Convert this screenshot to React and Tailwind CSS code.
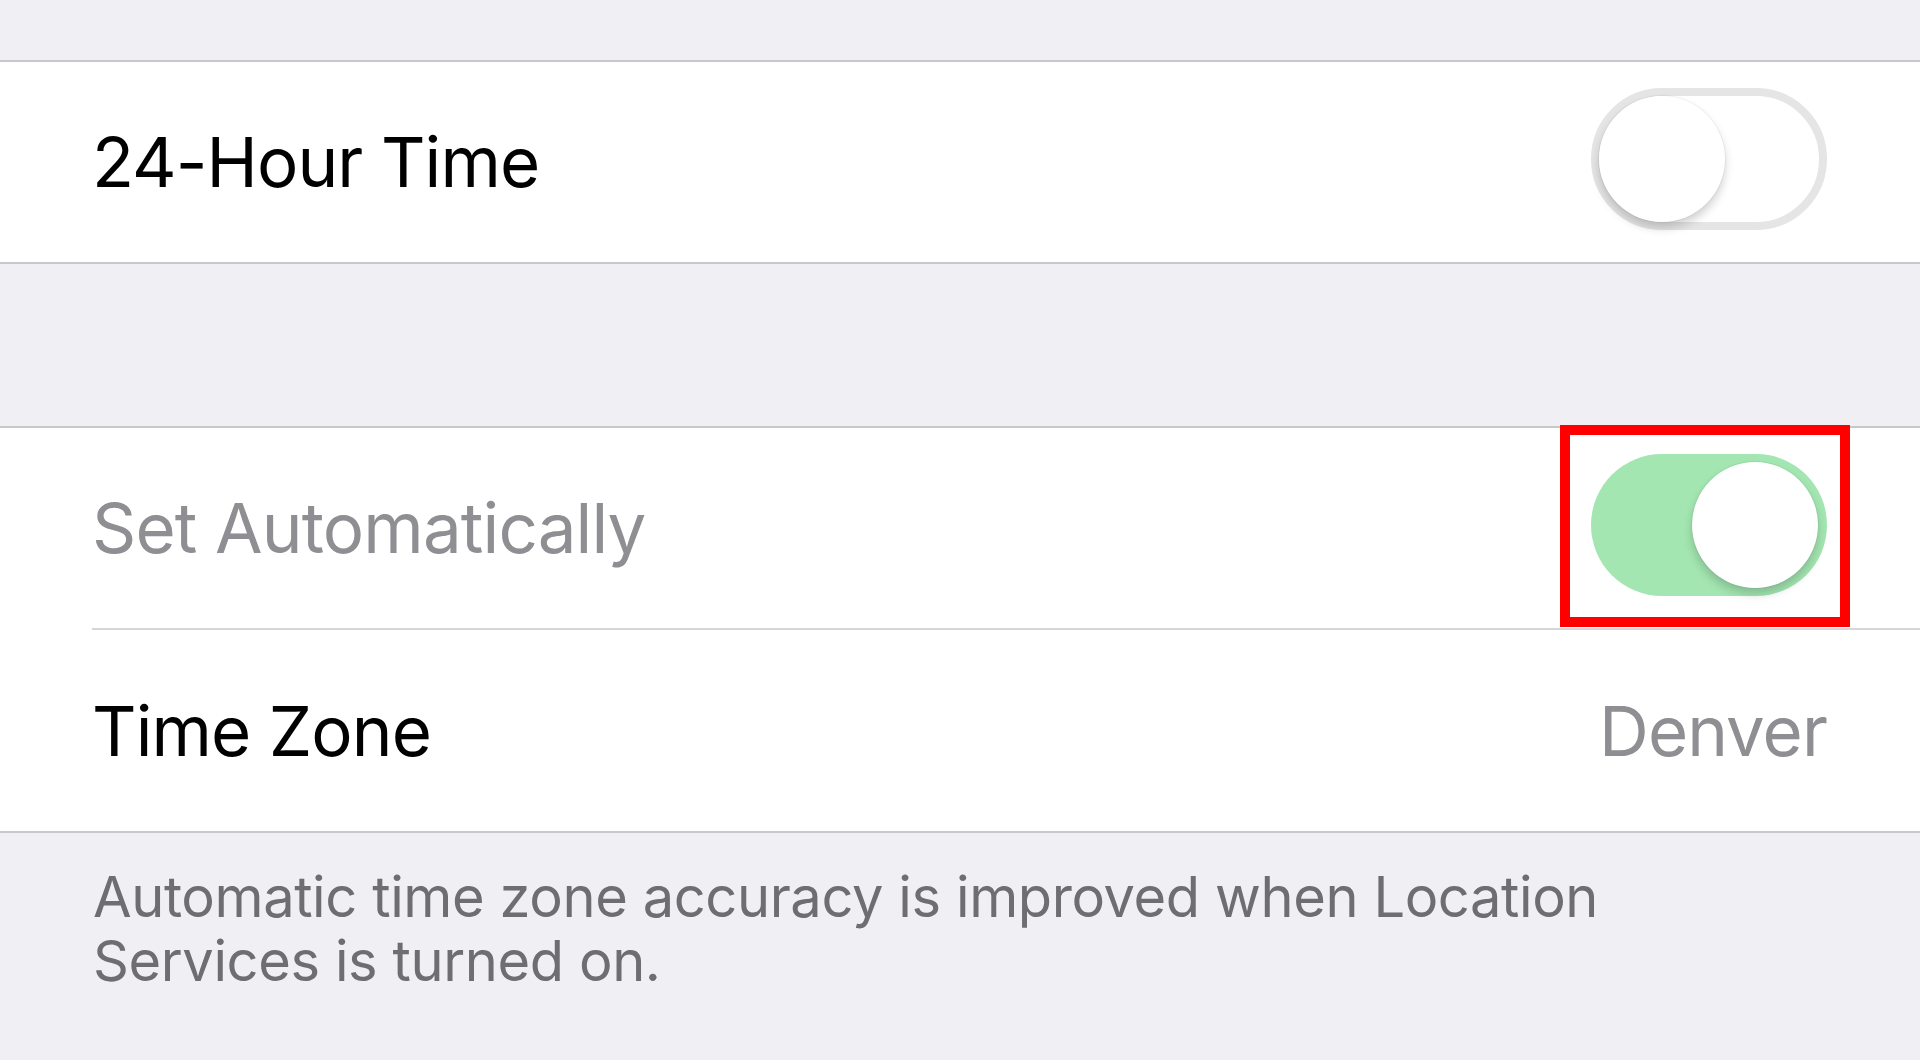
import { useState } from "react";

const Toggle = ({ on, onChange, muted }) => (
  <button
    type="button"
    onClick={onChange}
    className={`relative h-[142px] w-[236px] shrink-0 rounded-full transition-colors ${
      on
        ? muted
          ? "bg-[#a3e6b1]"
          : "bg-[#4cd964]"
        : "bg-white border-[8px] border-[#e5e5e5]"
    }`}
  >
    <span
      className={`absolute h-[126px] w-[126px] rounded-full bg-white shadow-[0_6px_10px_rgba(0,0,0,0.18),0_0_0_1px_rgba(0,0,0,0.04)] ${
        on ? "right-[9px] top-[8px]" : "left-0 top-0"
      }`}
    />
  </button>
);

const Row = ({ children, tall }) => (
  <div
    className={`flex items-center justify-between pl-[92px] pr-[93px] ${
      tall ? "h-[201px]" : "h-[200px]"
    }`}
  >
    {children}
  </div>
);

export default function App() {
  const [hour24, setHour24] = useState(false);
  const [auto, setAuto] = useState(true);

  return (
    <div
      className="min-h-[1060px] bg-[#efeff4] pt-[60px]"
      style={{ fontFamily: "Inter, 'Liberation Sans', sans-serif" }}
    >
      {/* 24-hour section */}
      <div className="border-y-2 border-[#c8c7cc] bg-white">
        <Row>
          <span className="text-[69px] leading-none tracking-[-0.9px] text-black">
            24-Hour Time
          </span>
          <div className="mb-[6px]">
            <Toggle on={hour24} onChange={() => setHour24(!hour24)} />
          </div>
        </Row>
      </div>

      <div className="h-[162px]" />

      {/* time zone section */}
      <div className="border-y-2 border-[#c8c7cc] bg-white">
        <Row>
          <span className="text-[69px] leading-none tracking-[-0.85px] text-[#8e8e93]">
            Set Automatically
          </span>
          <div className="relative">
            <Toggle on={auto} muted onChange={() => setAuto(!auto)} />
            <div className="pointer-events-none absolute -bottom-[25px] -left-[31px] -right-[23px] -top-[29px] border-[10px] border-[#ff0000]" />
          </div>
        </Row>
        <div className="ml-[92px] h-[2px] bg-[#d6d6da]" />
        <Row tall>
          <span className="mt-[2px] text-[69px] leading-none tracking-[-0.9px] text-black">
            Time Zone
          </span>
          <span className="mt-[2px] text-[69px] leading-none tracking-[-0.9px] text-[#8e8e93]">
            Denver
          </span>
        </Row>
      </div>

      <p className="max-w-[1640px] pl-[93px] pt-[32px] text-[56px] leading-[64px] tracking-[-0.4px] text-[#6d6d72]">
        Automatic time zone accuracy is improved when Location Services is turned on.
      </p>
    </div>
  );
}
